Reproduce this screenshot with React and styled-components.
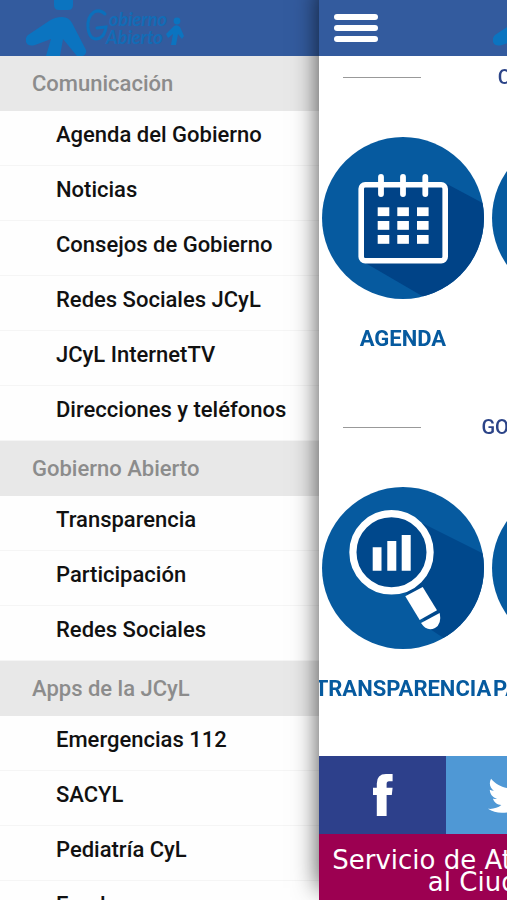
import React, { useState } from 'react'
import styled, { createGlobalStyle } from 'styled-components';
import { FaFlickr, FaTwitter, FaYoutube } from 'react-icons/fa';

const menu = [
    {
        title: "Comunicación",
        items: ["Agenda del Gobierno", "Noticias", "Consejos de Gobierno", "Redes Sociales JCyL", "JCyL InternetTV", "Direcciones y teléfonos"]
    },
    {
        title: "Gobierno Abierto",
        items: ["Transparencia", "Participación", "Redes Sociales"]
    },
    {
        title: "Apps de la JCyL",
        items: ["Emergencias 112", "SACYL", "Pediatría CyL", "Empleo"]
    },
]

function Logo() {
    return (
        <LogoSvg viewBox="0 0 160 56" role="img" aria-label="Gobierno Abierto">
            <g fill="#0b74c0">
                <path d="M28 0 H47 V5 Q47 10 42 10 H33 Q28 10 28 5 Z" />
                <path d="M2 35 L23 21 Q29 17 36 17 Q43 17 46 23 L60 50 Q61 54 57 56 H51 L37 39 L34 56 H20 L25 39 L9 45 Q2 47 0 42 Q-1 38 2 35 Z" />
                <circle cx="151" cy="21" r="3.4" />
                <path d="M140 34 L148 26 Q151 24 154 27 L158 36 L156 39 L152 34 L150 45 H145 L147 34 L142 38 Z" />
            </g>
            <path d="M79 14 Q74 9 68 12 Q61 17 62 28 Q64 42 74 38 Q79 35 80 27 L71 28" fill="none" stroke="#0b70bc" strokeWidth="3" strokeLinecap="round" />
            <LogoText x="83" y="26">obierno</LogoText>
            <LogoText x="80" y="44">Abierto</LogoText>
        </LogoSvg>
    )
}

function CalendarIcon() {
    return (
        <Disc viewBox="0 0 162 162" aria-hidden="true">
            <clipPath id="disc-calendar"><circle cx="81" cy="81" r="81" /></clipPath>
            <circle cx="81" cy="81" r="81" fill="#065a9f" />
            <path d="M40 50 L125 47 L170 71 V170 H119 L40 124 Z" fill="#004387" clipPath="url(#disc-calendar)" />
            <rect x="39.2" y="47.8" width="84" height="76" rx="4" fill="none" stroke="#fff" strokeWidth="5.6" />
            <path d="M59 40 V57 M81 40 V57 M103.3 40 V57" stroke="#fff" strokeWidth="5.8" strokeLinecap="round" />
            {[70.3, 84, 98].map((y) => [55.7, 75.3, 95].map((x) => (
                <rect key={`${x}-${y}`} x={x} y={y} width="11.6" height="8.8" fill="#fff" />
            )))}
        </Disc>
    )
}

function SearchIcon() {
    return (
        <Disc viewBox="0 0 162 162" aria-hidden="true">
            <clipPath id="disc-search"><circle cx="81" cy="81" r="81" /></clipPath>
            <circle cx="81" cy="81" r="81" fill="#065a9f" />
            <path d="M90 31 L170 71 V170 H150 L108 142 L80 100 Z" fill="#00488c" clipPath="url(#disc-search)" />
            <circle cx="69.5" cy="65.3" r="38.6" fill="#00488c" stroke="#fff" strokeWidth="7.2" />
            <path d="M50.7 60.3 H59.5 V83.7 H50.7 Z M65.3 54 H74.3 V83.7 H65.3 Z M79.7 48 H88.7 V83.7 H79.7 Z" fill="#fff" />
            <path d="M83.3 109.3 L100.7 100 L115 123.3 L97.7 133 Z" fill="#fff" />
            <path d="M99 136 L117.7 126 Q120 137 113 141 Q105 145 99 136 Z" fill="#fff" />
        </Disc>
    )
}

function PlainIcon() {
    return (
        <Disc viewBox="0 0 162 162" aria-hidden="true">
            <circle cx="81" cy="81" r="81" fill="#065a9f" />
        </Disc>
    )
}

const sections = [
    {
        title: "COMUNICACIÓN",
        items: [
            { label: "AGENDA", icon: CalendarIcon },
            { label: "", icon: PlainIcon },
        ]
    },
    {
        title: "GOBIERNO ABIERTO",
        items: [
            { label: "TRANSPARENCIA", icon: SearchIcon },
            { label: "PARTICIPACIÓN", icon: PlainIcon },
        ]
    },
]

function App() {
    const [open, setOpen] = useState(true)

    return (
        <Screen>
            <GlobalStyle />
            {open && (
                <Sidebar>
                    <SidebarHeader><Logo /></SidebarHeader>
                    {menu.map((group) => (
                        <section key={group.title}>
                            <GroupTitle>{group.title}</GroupTitle>
                            <MenuList>
                                {group.items.map((item) => (
                                    <li key={item}><MenuLink href="#">{item}</MenuLink></li>
                                ))}
                            </MenuList>
                        </section>
                    ))}
                </Sidebar>
            )}

            <Main>
                <Page>
                    <PageHeader>
                        <MenuButton type="button" aria-label="Menú" aria-expanded={open} onClick={() => setOpen(!open)}>
                            <Bar /><Bar /><Bar />
                        </MenuButton>
                        <Logo />
                    </PageHeader>

                    {sections.map((section) => (
                        <Section key={section.title}>
                            <SectionHead>
                                <Line />
                                <SectionTitle>{section.title}</SectionTitle>
                                <Line />
                            </SectionHead>
                            <Tiles>
                                {section.items.map(({ label, icon: Icon }, i) => (
                                    <Tile key={i} href="#">
                                        <Icon />
                                        <span>{label}</span>
                                    </Tile>
                                ))}
                            </Tiles>
                        </Section>
                    ))}

                    <Social>
                        <SocialLink href="#" aria-label="Facebook" $color="#2d408b">
                            <svg width="20" height="42" viewBox="0 0 20 42" fill="#fff">
                                <path d="M3.8 42 V21 H0 V13.7 H3.8 V9.5 Q3.8 0 13 0 H19.6 V7.3 H16 Q13.6 7.3 13.6 10 V13.7 H19.6 L18.8 21 H13.6 V42 Z" />
                            </svg>
                        </SocialLink>
                        <SocialLink href="#" aria-label="Twitter" $color="#4f98d5"><FaTwitter size={44} /></SocialLink>
                        <SocialLink href="#" aria-label="YouTube" $color="#c4302b"><FaYoutube size={44} /></SocialLink>
                        <SocialLink href="#" aria-label="Flickr" $color="#2d408b"><FaFlickr size={44} /></SocialLink>
                    </Social>
                    <Service href="#">Servicio de Atención<br />al Ciudadano</Service>
                </Page>
            </Main>
        </Screen>
    )
}

export default App

const GlobalStyle = createGlobalStyle`
    * {
        box-sizing: border-box;
    }

    body {
        margin: 0;
        background: #fff;
        font-family: Roboto, "Liberation Sans", sans-serif;
    }

    a {
        text-decoration: none;
    }
`

const Screen = styled.div`
    display: flex;
    height: 100vh;
    overflow: hidden;
`

const Sidebar = styled.nav`
    flex: 0 0 63%;
    overflow-y: auto;
    scrollbar-width: none;
    background: #fefefe;
`

const SidebarHeader = styled.div`
    height: 56px;
    padding-left: 26px;
    background: #335b9e;
`

const LogoSvg = styled.svg`
    display: block;
    width: 160px;
    height: 56px;
`

const LogoText = styled.text`
    font-family: Lato, sans-serif;
    font-size: 18px;
    font-style: italic;
    font-weight: 700;
    fill: #126cb6;
`

const GroupTitle = styled.h2`
    margin: 0;
    padding-left: 32px;
    background: #e8e8e8;
    color: #8c8c8c;
    font-size: 22px;
    font-weight: 500;
    line-height: 55px;
`

const MenuList = styled.ul`
    margin: 0;
    padding: 0;
    list-style: none;
`

const MenuLink = styled.a`
    display: block;
    height: 55px;
    padding-left: 56px;
    border-bottom: 1px solid #f5f5f5;
    color: #111;
    font-size: 22px;
    font-weight: 500;
    line-height: 48px;
    white-space: nowrap;
`

const Main = styled.main`
    flex: 1;
    min-width: 0;
    z-index: 1;
    background: #fff;
    box-shadow: 0 -12px 24px 0 rgba(0, 0, 0, 0.7);
    overflow: hidden;
`

const Page = styled.div`
    display: flex;
    flex-direction: column;
    width: 100vw;
    min-height: 100%;
`

const PageHeader = styled.header`
    display: grid;
    grid-template-columns: 1fr auto 1fr;
    align-items: center;
    height: 56px;
    padding: 0 15px;
    background: #335b9e;
`

const MenuButton = styled.button`
    display: flex;
    flex-direction: column;
    gap: 5px;
    width: 44px;
    padding: 0;
    border: 0;
    background: none;
    cursor: pointer;
`

const Bar = styled.span`
    height: 6px;
    border-radius: 3px;
    background: #fff;
`

const Section = styled.section`
    padding-bottom: 56px;
`

const SectionHead = styled.div`
    display: flex;
    align-items: center;
    justify-content: space-between;
    height: 42px;
    padding: 0 24px;
`

const Line = styled.span`
    width: 78px;
    height: 1px;
    background: #999;
`

const SectionTitle = styled.h3`
    margin: 0;
    color: #2c4488;
    font-size: 20px;
    font-weight: 500;
`

const Tiles = styled.div`
    display: grid;
    grid-template-columns: repeat(3, 162px);
    justify-content: center;
    gap: 8px;
    padding-top: 39px;
`

const Tile = styled.a`
    display: flex;
    flex-direction: column;
    align-items: center;
    gap: 28px;
    min-width: 0;
    color: #065a9f;
    font-size: 22px;
    font-weight: 700;
    line-height: 24px;
    white-space: nowrap;

    span {
        height: 23px;
    }
`

const Disc = styled.svg`
    display: block;
    width: 162px;
    height: 162px;
`

const Social = styled.div`
    display: grid;
    grid-template-columns: repeat(4, 1fr);
    height: 78px;
`

const SocialLink = styled.a`
    display: flex;
    align-items: center;
    justify-content: center;
    background: ${({ $color }) => $color};
    color: #fff;
`

const Service = styled.a`
    flex: 1;
    padding: 15px 228px 7px 12px;
    background: #9c0051;
    color: #fff;
    font-family: "DejaVu Sans", sans-serif;
    font-size: 26px;
    line-height: 22px;
    text-align: right;
    white-space: nowrap;
`
